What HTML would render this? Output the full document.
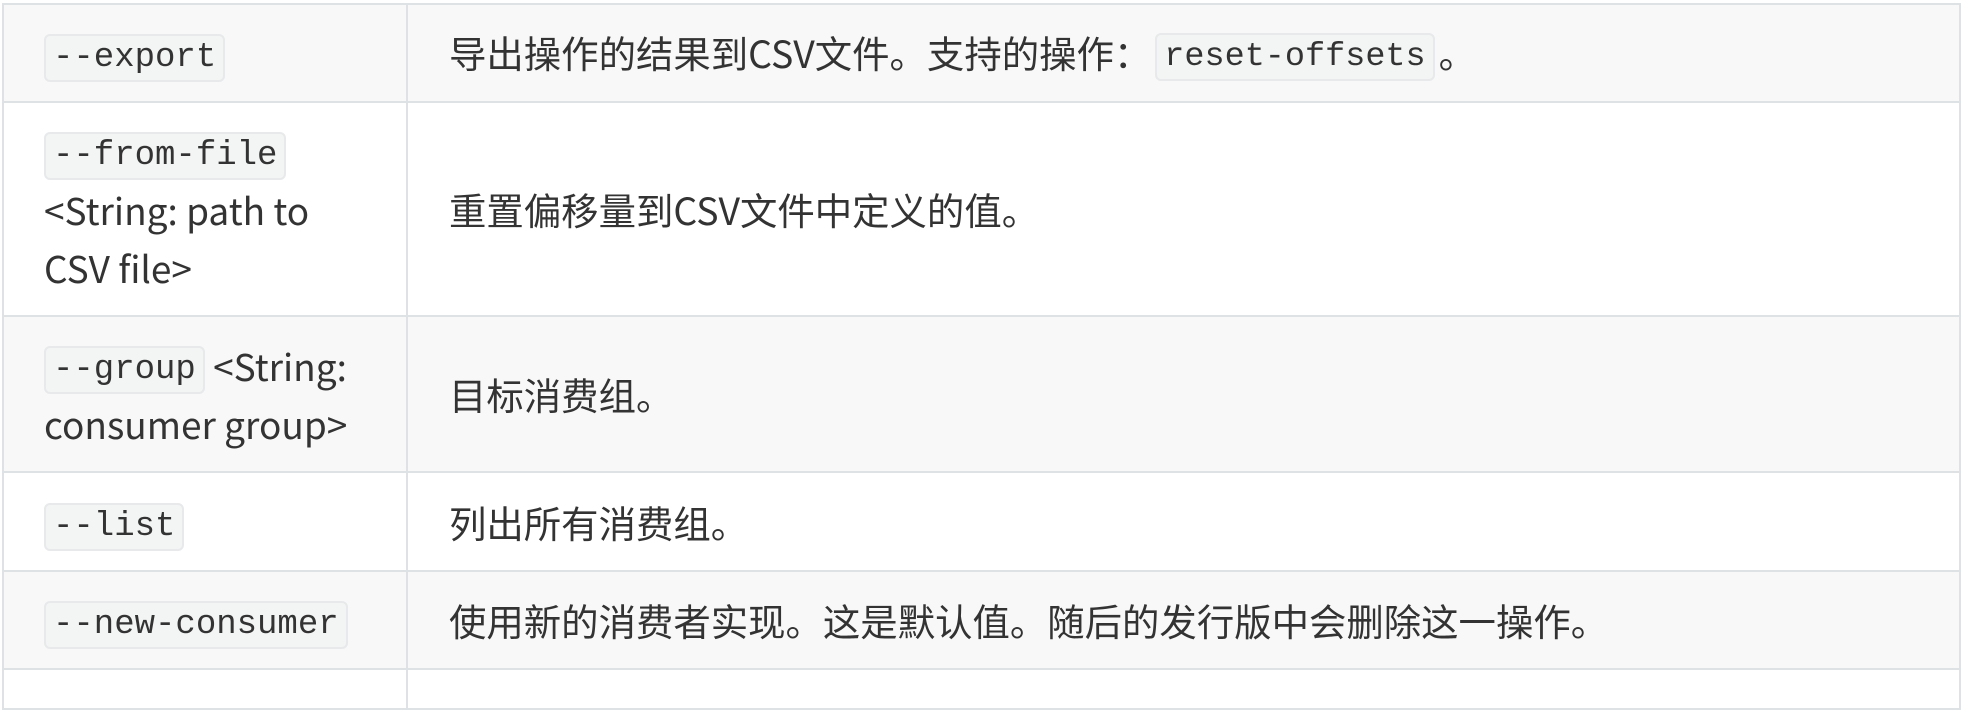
<!DOCTYPE html>
<html><head><meta charset="utf-8"><style>
html,body{margin:0;padding:0;background:#fff;width:1962px;height:674px;overflow:hidden}
table{position:absolute;left:2px;top:3px;width:1959px;border-collapse:collapse;table-layout:fixed;color:#333}
td{border:2px solid #dfe2e5;padding:0 0 0 40px;vertical-align:middle;font-family:"Noto Sans CJK SC","Liberation Sans",sans-serif}
td.l{font-size:37px;line-height:58px;padding-right:10px}
td.r{font-size:37.4px;padding-left:41px}
tr:nth-child(odd) td{background:#f8f8f8}
tr:nth-child(even) td{background:#fff}
code{font-family:"Liberation Mono",monospace;font-size:34px;line-height:40px;background:#f3f4f4;border:2px solid #e7e9eb;border-radius:6px;padding:2px 7px;color:#333;display:inline-block;vertical-align:middle}
td.r code{font-size:33.5px;margin:0 4px}
</style></head><body>
<table>
<colgroup><col style="width:404px"><col></colgroup>
<tr style="height:98px"><td class="l"><code>--export</code></td><td class="r">导出操作的结果到CSV文件。支持的操作：<code>reset-offsets</code>。</td></tr>
<tr style="height:214px"><td class="l"><code>--from-file</code><br>&lt;String: path to<br>CSV file&gt;</td><td class="r">重置偏移量到CSV文件中定义的值。</td></tr>
<tr style="height:156px"><td class="l"><code>--group</code> &lt;String: consumer group&gt;</td><td class="r">目标消费组。</td></tr>
<tr style="height:99px"><td class="l"><code>--list</code></td><td class="r">列出所有消费组。</td></tr>
<tr style="height:98px"><td class="l"><code>--new-consumer</code></td><td class="r">使用新的消费者实现。这是默认值。随后的发行版中会删除这一操作。</td></tr>
<tr style="height:40px"><td class="l"></td><td class="r"></td></tr>
</table>
</body></html>
